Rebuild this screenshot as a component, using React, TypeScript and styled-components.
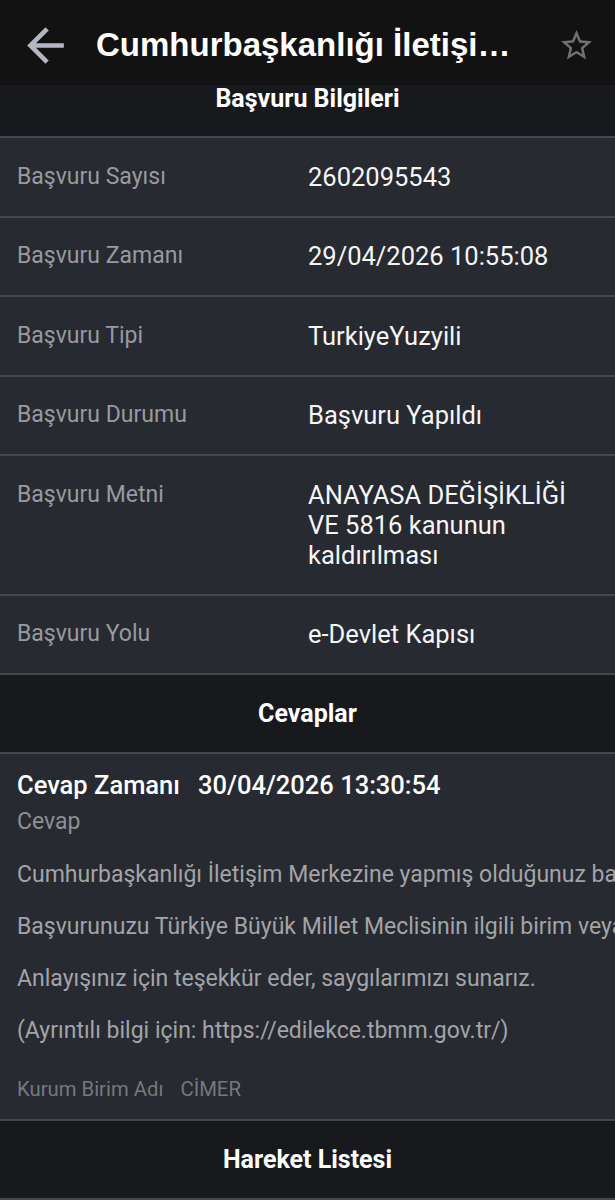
import styled, { createGlobalStyle } from 'styled-components';

type Field = {
	label: string;
	value: string[];
};

const fields: Field[] = [
	{ label: 'Başvuru Sayısı', value: ['2602095543'] },
	{ label: 'Başvuru Zamanı', value: ['29/04/2026 10:55:08'] },
	{ label: 'Başvuru Tipi', value: ['TurkiyeYuzyili'] },
	{ label: 'Başvuru Durumu', value: ['Başvuru Yapıldı'] },
	{ label: 'Başvuru Metni', value: ['ANAYASA DEĞİŞİKLİĞİ', 'VE 5816 kanunun', 'kaldırılması'] },
	{ label: 'Başvuru Yolu', value: ['e-Devlet Kapısı'] },
];

const answerLines = [
	'Cumhurbaşkanlığı İletişim Merkezine yapmış olduğunuz başvurunuz incelenmiştir.',
	'Başvurunuzu Türkiye Büyük Millet Meclisinin ilgili birim veya komisyonlarına iletebilirsiniz.',
	'Anlayışınız için teşekkür eder, saygılarımızı sunarız.',
	'(Ayrıntılı bilgi için: https://edilekce.tbmm.gov.tr/)',
];

export default function App() {
	return (
		<>
			<GlobalStyle />
			<Page>
				<AppBar>
					<IconButton aria-label="Geri">
						<svg width="55" height="55" viewBox="0 0 24 24">
							<path fill="#b4b6c4" d="M20 11H7.83l5.59-5.59L12 4l-8 8 8 8 1.41-1.41L7.83 13H20v-2z" />
						</svg>
					</IconButton>
					<Title>Cumhurbaşkanlığı İletişim Merkezi</Title>
					<IconButton aria-label="Favori">
						<svg width="37" height="37" viewBox="0 0 24 24">
							<path
								fill="#707173"
								d="M22 9.24l-7.19-.62L12 2 9.19 8.63 2 9.24l5.46 4.73L5.82 21 12 17.27 18.18 21l-1.63-7.03L22 9.24zM12 15.4l-3.76 2.27 1-4.28-3.32-2.88 4.38-.38L12 6.1l1.71 4.04 4.38.38-3.32 2.88 1 4.28L12 15.4z"
							/>
						</svg>
					</IconButton>
				</AppBar>

				<SectionHeader $scrolled>Başvuru Bilgileri</SectionHeader>
				{fields.map((f) => (
					<Row key={f.label}>
						<Label>{f.label}</Label>
						<Value>
							{f.value.map((line) => (
								<div key={line}>{line}</div>
							))}
						</Value>
					</Row>
				))}

				<SectionHeader>Cevaplar</SectionHeader>
				<AnswerCard>
					<AnswerTitle>
						Cevap Zamanı<AnswerDate>30/04/2026 13:30:54</AnswerDate>
					</AnswerTitle>
					<AnswerLabel>Cevap</AnswerLabel>
					<AnswerBody>
						{answerLines.map((line) => (
							<Paragraph key={line}>{line}</Paragraph>
						))}
					</AnswerBody>
					<Unit>
						Kurum Birim Adı<UnitName>CİMER</UnitName>
					</Unit>
				</AnswerCard>

				<SectionHeader>Hareket Listesi</SectionHeader>
			</Page>
		</>
	);
}

const GlobalStyle = createGlobalStyle`
	html, body {
		margin: 0;
		padding: 0;
		background: #272a31;
	}
	body {
		font-family: Roboto, "Noto Sans", "Liberation Sans", sans-serif;
	}
`;

const Page = styled.div`
	width: 615px;
	height: 1200px;
	overflow: hidden;
	display: flex;
	flex-direction: column;
	background: #272a31;
`;

const AppBar = styled.header`
	height: 85px;
	box-sizing: border-box;
	flex-shrink: 0;
	background: #121212;
	display: flex;
	align-items: center;
	padding: 5px 20px 0 18px;
`;

const IconButton = styled.div`
	display: flex;
	align-items: center;
	justify-content: center;
	flex-shrink: 0;
`;

const Title = styled.h1`
	flex: 1;
	margin: 0 0 0 23px;
	max-width: 425px;
	color: #ffffff;
	font-family: "Liberation Sans", Arial, sans-serif;
	font-size: 33px;
	font-weight: 700;
	white-space: nowrap;
	overflow: hidden;
	text-overflow: ellipsis;
	margin-right: auto;
`;

const SectionHeader = styled.div<{ $scrolled?: boolean }>`
	flex-shrink: 0;
	height: ${(p) => (p.$scrolled ? '51px' : '77px')};
	background: #18191c;
	color: #ffffff;
	font-size: 25px;
	font-weight: 700;
	display: flex;
	justify-content: center;
	align-items: ${(p) => (p.$scrolled ? 'flex-start' : 'center')};
	line-height: 28px;
	border-bottom: 2px solid #44474e;
`;

const Row = styled.div`
	flex-shrink: 0;
	display: grid;
	grid-template-columns: 291px 1fr;
	padding: 23.5px 17px 24px;
	border-bottom: 2px solid #44474e;
	line-height: 30px;
`;

const Label = styled.div`
	color: #989a9f;
	font-size: 23px;
`;

const Value = styled.div`
	color: #f5f5f5;
	font-size: 25.5px;
`;

const AnswerCard = styled.div`
	flex-shrink: 0;
	padding: 15px 0 16px 17px;
	border-bottom: 2px solid #44474e;
	overflow: hidden;
`;

const AnswerTitle = styled.div`
	color: #ffffff;
	font-size: 25.5px;
	font-weight: 500;
	line-height: 32px;
`;

const AnswerDate = styled.span`
	margin-left: 18px;
`;

const AnswerLabel = styled.div`
	margin-top: 6px;
	color: #8e9095;
	font-size: 23px;
	line-height: 30px;
`;

const AnswerBody = styled.div`
	margin-top: 23px;
	display: flex;
	flex-direction: column;
	gap: 22px;
`;

const Paragraph = styled.div`
	color: #a2a4a8;
	font-size: 23px;
	line-height: 30px;
	white-space: nowrap;
`;

const Unit = styled.div`
	margin-top: 29px;
	color: #76787d;
	font-size: 20.3px;
	line-height: 28px;
`;

const UnitName = styled.span`
	margin-left: 17px;
`;
